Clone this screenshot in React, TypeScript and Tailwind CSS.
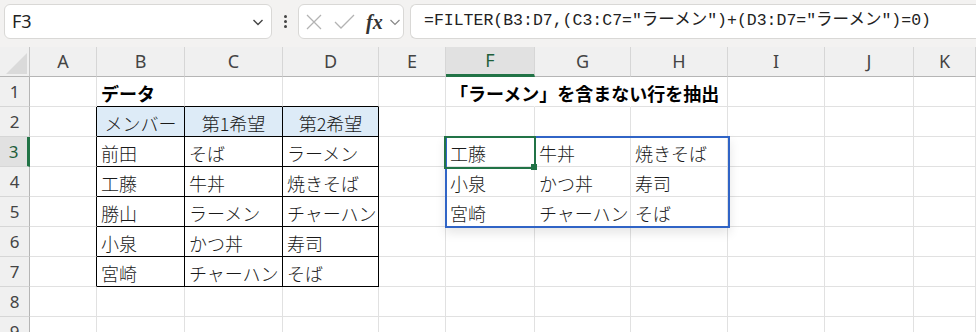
import React from "react";

const COLS = ["A", "B", "C", "D", "E", "F", "G", "H", "I", "J", "K"];
const ROWS = [1, 2, 3, 4, 5, 6, 7, 8, 9];

type CellData = { text: string; bold?: boolean; head?: boolean };

const DATA: Record<string, CellData> = {
  B1: { text: "データ", bold: true },
  F1: { text: "「ラーメン」を含まない行を抽出", bold: true },
  B2: { text: "メンバー", head: true },
  C2: { text: "第1希望", head: true },
  D2: { text: "第2希望", head: true },
  B3: { text: "前田" },
  C3: { text: "そば" },
  D3: { text: "ラーメン" },
  B4: { text: "工藤" },
  C4: { text: "牛丼" },
  D4: { text: "焼きそば" },
  B5: { text: "勝山" },
  C5: { text: "ラーメン" },
  D5: { text: "チャーハン" },
  B6: { text: "小泉" },
  C6: { text: "かつ丼" },
  D6: { text: "寿司" },
  B7: { text: "宮崎" },
  C7: { text: "チャーハン" },
  D7: { text: "そば" },
  F3: { text: "工藤" },
  G3: { text: "牛丼" },
  H3: { text: "焼きそば" },
  F4: { text: "小泉" },
  G4: { text: "かつ丼" },
  H4: { text: "寿司" },
  F5: { text: "宮崎" },
  G5: { text: "チャーハン" },
  H5: { text: "そば" },
};

// right edge of A..D inside rows 2-7 is the data table frame
const rightClass = (r: number, c: number) => {
  if (r >= 2 && r <= 7 && c <= 3) return "border-r-black";
  if (r === 1 && (c === 5 || c === 6)) return "border-r-transparent";
  return "border-r-[#e1e1e1]";
};

const bottomClass = (r: number, c: number) =>
  r >= 1 && r <= 7 && c >= 1 && c <= 3 ? "border-b-black" : "border-b-[#e1e1e1]";

function Toolbar() {
  return (
    <div className="h-[47px] bg-[#f3f2f1] flex items-start pt-[4px] pl-[4px]">
      <div className="w-[268px] h-[35px] bg-white border border-[#d9d8d6] rounded-[6px] flex items-center justify-between pl-[7px] pr-[6px]">
        <span className="font-['Noto_Sans',sans-serif] text-[18px] text-[#222]">F3</span>
        <svg width="14" height="14" viewBox="0 0 14 14">
          <path d="M2.5 5 L7 9.5 L11.5 5" fill="none" stroke="#444" strokeWidth="1.4" />
        </svg>
      </div>
      <div className="w-[26px] h-[35px] flex flex-col items-center justify-center gap-[2px]">
        <span className="w-[3px] h-[3px] bg-[#444] rounded-full" />
        <span className="w-[3px] h-[3px] bg-[#444] rounded-full" />
        <span className="w-[3px] h-[3px] bg-[#444] rounded-full" />
      </div>
      <div className="w-[106px] h-[35px] bg-white border border-[#d9d8d6] rounded-[6px] flex items-center pl-[7px]">
        <svg width="16" height="16" viewBox="0 0 16 16">
          <path d="M1 1 L15 15 M15 1 L1 15" stroke="#b3b3b3" strokeWidth="1.3" />
        </svg>
        <svg width="21" height="16" viewBox="0 0 21 16" className="ml-[12px]">
          <path d="M1 8 L7 14 L20 1" fill="none" stroke="#b3b3b3" strokeWidth="1.3" />
        </svg>
        <span className="ml-[11px] font-['Liberation_Serif',serif] italic font-bold text-[20px] text-[#333] leading-none">
          fx
        </span>
        <svg width="12" height="12" viewBox="0 0 12 12" className="ml-[6px]">
          <path d="M1.5 4 L6 8.5 L10.5 4" fill="none" stroke="#888" strokeWidth="1.2" />
        </svg>
      </div>
      <div className="ml-[6px] flex-1 h-[35px] bg-white border border-r-0 border-[#d9d8d6] rounded-l-[6px] flex items-center pl-[13px] whitespace-nowrap">
        <span className="font-['Liberation_Mono','Noto_Sans_CJK_JP',monospace] text-[16.5px] text-[#222]">
          =FILTER(B3:D7,(C3:C7="ラーメン")+(D3:D7="ラーメン")=0)
        </span>
      </div>
    </div>
  );
}

export default function App() {
  return (
    <div className="w-[976px] h-[332px] overflow-hidden bg-white">
      <Toolbar />
      <div className="relative grid grid-cols-[30px_67px_88px_98px_96px_67px_89px_96px_97px_97px_89px_1fr] auto-rows-[30px] font-['Noto_Sans_CJK_JP',sans-serif] text-[18px] text-[#1a1a1a]">
        {/* corner */}
        <div className="bg-[#f0f0f0] border-r border-b border-r-[#c6c6c6] border-b-[#b5b5b5] relative">
          <svg width="30" height="30" viewBox="0 0 30 30" className="absolute left-0 top-0">
            <polygon points="27,6 27,27 6,27" fill="#dadada" />
          </svg>
        </div>
        {COLS.map((c) =>
          c === "F" ? (
            <div
              key={c}
              className="bg-[#e1e1e1] border-r border-r-[#d6d6d6] border-b-[3px] border-b-[#217346] flex items-center justify-center font-['Noto_Sans',sans-serif] text-[18px] text-[#1e5e3a]"
            >
              {c}
            </div>
          ) : (
            <div
              key={c}
              className="bg-[#f0f0f0] border-r border-b border-r-[#d6d6d6] border-b-[#b5b5b5] flex items-center justify-center font-['Noto_Sans',sans-serif] text-[18px] text-[#444]"
            >
              {c}
            </div>
          )
        )}
        {ROWS.map((r) => (
          <React.Fragment key={r}>
            {r === 3 ? (
              <div className="bg-[#e1e1e1] border-b border-b-[#d6d6d6] border-r-[3px] border-r-[#217346] flex items-center justify-center font-['Noto_Sans',sans-serif] text-[17px] text-[#1e5e3a]">
                {r}
              </div>
            ) : (
              <div className="bg-[#f0f0f0] border-b border-r border-b-[#d6d6d6] border-r-[#b5b5b5] flex items-center justify-center font-['Noto_Sans',sans-serif] text-[17px] text-[#444]">
                {r}
              </div>
            )}
            {COLS.map((c, ci) => {
              const d = DATA[`${c}${r}`];
              return (
                <div
                  key={c}
                  className={`border-r border-b ${rightClass(r, ci)} ${bottomClass(r, ci)} ${
                    d?.head ? "bg-[#ddebf7] justify-center" : "pl-[4px]"
                  } flex items-center pt-[2px] whitespace-nowrap overflow-visible leading-none ${
                    d?.bold ? "font-bold text-black" : "font-light"
                  }`}
                >
                  {d?.text}
                </div>
              );
            })}
          </React.Fragment>
        ))}

        {/* spill range of the FILTER result */}
        <div className="absolute left-[445px] top-[89px] w-[285px] h-[92px] border-2 border-[#3064c6] shadow-[0_5px_10px_rgba(0,0,0,0.10)] pointer-events-none" />
        {/* active cell F3 */}
        <div className="absolute left-[444px] top-[89px] w-[92px] h-[33px] border-2 border-[#217346] pointer-events-none" />
        <div className="absolute left-[531px] top-[117px] w-[6px] h-[6px] bg-[#217346] pointer-events-none" />
      </div>
    </div>
  );
}
